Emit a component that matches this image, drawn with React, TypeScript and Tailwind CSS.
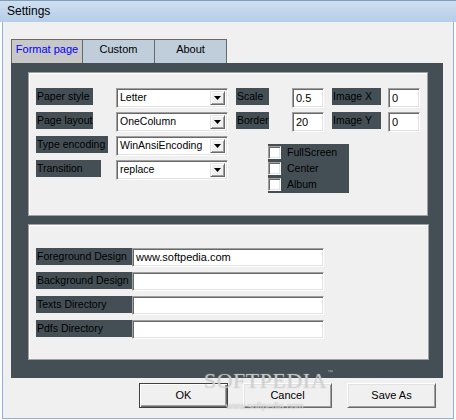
import React from 'react'

const font = { fontFamily: '"Liberation Sans", Arial, sans-serif' }

function Label({ text, w }: { text: string; w: string }) {
  return (
    <div className={`${w} h-[17px] bg-[#444f55] pl-[1px] text-[10.5px] leading-[17px] text-black whitespace-nowrap`}>
      {text}
    </div>
  )
}

function Sunken({ className, children }: { className: string; children?: React.ReactNode }) {
  return (
    <div
      className={`${className} bg-white border border-t-[#a0a0a0] border-l-[#a0a0a0] border-b-white border-r-white shadow-[inset_1px_1px_0_#696969,inset_-1px_-1px_0_#e3e3e3] text-[11px] text-black flex items-center pl-[3px] whitespace-nowrap overflow-hidden`}
    >
      {children}
    </div>
  )
}

function Combo({ value }: { value: string }) {
  return (
    <Sunken className="w-[112px] h-[20px] relative">
      <span className="text-[10.5px]">{value}</span>
      <div className="absolute right-[2px] top-[2px] w-[15px] h-[14px] bg-[#f0f0f0] border border-t-[#e3e3e3] border-l-[#e3e3e3] border-b-[#696969] border-r-[#696969] shadow-[inset_1px_1px_0_#fff,inset_-1px_-1px_0_#a0a0a0] flex items-center justify-center">
        <svg width="7" height="4" viewBox="0 0 7 4">
          <path d="M0 0h7L3.5 4z" fill="#000" />
        </svg>
      </div>
    </Sunken>
  )
}

function Check({ text }: { text: string }) {
  return (
    <div className="flex items-center h-[13px]">
      <div className="w-[13px] h-[13px] bg-white border border-t-[#a0a0a0] border-l-[#a0a0a0] border-b-white border-r-white shadow-[inset_1px_1px_0_#696969,inset_-1px_-1px_0_#e3e3e3]" />
      <span className="ml-[6px] text-[10.5px] leading-[13px] text-black">{text}</span>
    </div>
  )
}

function Button({ text, def }: { text: string; def?: boolean }) {
  return (
    <div
      className={`w-[89px] h-[25px] bg-[#f0f0f0] flex items-center justify-center text-[11px] text-black ${
        def
          ? 'border border-[#404040] shadow-[inset_1px_1px_0_#fff,inset_-1px_-1px_0_#696969,inset_-2px_-2px_0_#a0a0a0]'
          : 'border border-t-white border-l-white border-b-[#696969] border-r-[#696969] shadow-[inset_1px_1px_0_#e3e3e3,inset_-1px_-1px_0_#a0a0a0]'
      }`}
    >
      {text}
    </div>
  )
}

export default function App() {
  return (
    <div className="relative w-[456px] h-[420px] flex flex-col bg-white overflow-hidden" style={font}>
      {/* Title bar */}
      <div className="h-[22px] shrink-0 bg-gradient-to-b from-[#cfdff1] to-[#b5cde8] border-t border-[#7f9db9] pl-[7px] text-[12px] leading-[20px] text-black">
        Settings
      </div>

      {/* Window body */}
      <div className="flex-1 ml-[2px] mr-[2px] mb-[1px] border-x border-b border-[#8db2da] bg-[#f0f0f0] flex flex-col">
        {/* Tabs */}
        <div className="mt-[17px] ml-[8px] flex h-[24px]">
          <div className="w-[72px] h-[24px] bg-[#c8c8c8] border-t border-x border-[#696969] text-center text-[11px] leading-[16px] pt-[1px] text-[#0000ff]">
            Format page
          </div>
          <div className="w-[72px] h-[24px] bg-[#c0cedb] border-t border-r border-[#696969] text-center text-[11px] leading-[16px] pt-[1px] text-black">
            Custom
          </div>
          <div className="w-[72px] h-[24px] bg-[#c0cedb] border-t border-r border-[#696969] text-center text-[11px] leading-[16px] pt-[1px] text-black">
            About
          </div>
        </div>

        {/* Dark page */}
        <div className="ml-[8px] w-[432px] h-[315px] bg-[#444f55] pl-[17px] pt-[9px] flex flex-col">
          {/* Upper panel */}
          <div className="w-[400px] h-[144px] bg-[#f0f0f0] border border-[#a0a0a0] shadow-[inset_1px_1px_0_#fff] pl-[7px] pt-[15px] flex flex-col gap-[4px]">
            <div className="flex items-start h-[20px]">
              <div className="w-[80px]"><Label text="Paper style" w="w-[57px]" /></div>
              <Combo value="Letter" />
              <div className="w-[56px] ml-[8px]"><Label text="Scale" w="w-[33px]" /></div>
              <Sunken className="w-[32px] h-[20px]">0.5</Sunken>
              <div className="w-[56px] ml-[8px]"><Label text="Image X" w="w-[49px]" /></div>
              <Sunken className="w-[32px] h-[20px]">0</Sunken>
            </div>
            <div className="flex items-start h-[20px]">
              <div className="w-[80px]"><Label text="Page layout" w="w-[57px]" /></div>
              <Combo value="OneColumn" />
              <div className="w-[56px] ml-[8px]"><Label text="Border" w="w-[33px]" /></div>
              <Sunken className="w-[32px] h-[20px]">20</Sunken>
              <div className="w-[56px] ml-[8px]"><Label text="Image Y" w="w-[49px]" /></div>
              <Sunken className="w-[32px] h-[20px]">0</Sunken>
            </div>
            <div className="flex items-start">
              <div className="flex flex-col gap-[4px]">
                <div className="flex items-start h-[20px]">
                  <div className="w-[80px]"><Label text="Type encoding" w="w-[72px]" /></div>
                  <Combo value="WinAnsiEncoding" />
                </div>
                <div className="flex items-start h-[20px]">
                  <div className="w-[80px]"><Label text="Transition" w="w-[65px]" /></div>
                  <Combo value="replace" />
                </div>
              </div>
              <div className="ml-[40px] mt-[8px] w-[81px] h-[49px] bg-[#444f55] pt-[2px] flex flex-col gap-[3px]">
                <Check text="FullScreen" />
                <Check text="Center" />
                <Check text="Album" />
              </div>
            </div>
          </div>

          {/* Lower panel */}
          <div className="mt-[8px] w-[401px] h-[136px] bg-[#f0f0f0] border border-[#a0a0a0] shadow-[inset_1px_1px_0_#fff] pl-[7px] pt-[23px] flex flex-col gap-[5px]">
            {[
              ['Foreground Design', 'www.softpedia.com'],
              ['Background Design', ''],
              ['Texts Directory', ''],
              ['Pdfs Directory', ''],
            ].map(([label, value]) => (
              <div key={label} className="flex items-start h-[19px]">
                <Label text={label} w="w-[96px]" />
                <Sunken className="w-[192px] h-[19px]">{value}</Sunken>
              </div>
            ))}
          </div>
        </div>

        {/* Buttons */}
        <div className="mt-[5px] ml-[136px] flex gap-[15px]">
          <Button text="OK" def />
          <Button text="Cancel" />
          <Button text="Save As" />
        </div>
      </div>

      {/* Watermark overlay */}
      <div
        className="absolute left-[204px] top-[370px] text-[22px] leading-[22px] tracking-[0.5px] text-white/40 pointer-events-none [text-shadow:0_0_1px_#b0b0b0]"
        style={{ fontFamily: '"Liberation Serif", serif' }}
      >
        SOFTPEDIA
      </div>
      <div className="absolute left-[327px] top-[369px] text-[6px] leading-[6px] text-white/50 pointer-events-none">
        ™
      </div>
      <div className="absolute left-[226px] top-[401px] text-[9px] leading-[11px] text-white/60 pointer-events-none [text-shadow:0_0_1px_#a0a0a0]">
        www.softpedia.com
      </div>
    </div>
  )
}
